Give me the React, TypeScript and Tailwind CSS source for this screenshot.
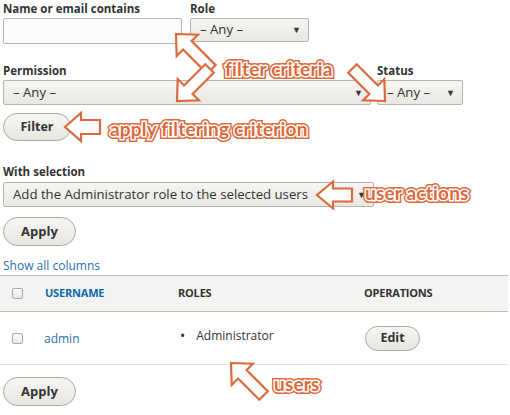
import React from "react";

const OR = "#dc6a3c";

function Arrow({ x, y, rot, H, W, w, L }: { x: number; y: number; rot: number; H: number; W: number; w: number; L: number }) {
  const pts = [
    [0, 0],
    [H, -W],
    [H, -w],
    [H + L, -w],
    [H + L, w],
    [H, w],
    [H, W],
  ]
    .map((p) => p.join(","))
    .join(" ");
  return (
    <polygon
      points={pts}
      transform={`translate(${x} ${y}) rotate(${rot})`}
      fill="white"
      stroke={OR}
      strokeWidth={2.2}
      strokeLinejoin="miter"
    />
  );
}

function Note({ children, className }: { children: React.ReactNode; className: string }) {
  const base =
    "absolute left-0 top-0 whitespace-nowrap font-bold text-[19px] leading-none tracking-[0.2px] text-[#dc6a3c] [font-family:Lato,'Open_Sans',sans-serif] [paint-order:stroke_fill]";
  return (
    <span className={`absolute ${className}`}>
      <span className="invisible whitespace-nowrap font-bold text-[19px] leading-none tracking-[0.2px] [font-family:Lato,'Open_Sans',sans-serif]">
        {children}
      </span>
      <span className={`${base} [-webkit-text-stroke:6px_#dc6a3c]`}>{children}</span>
      <span className={`${base} [-webkit-text-stroke:3px_#ffffff]`}>{children}</span>
    </span>
  );
}

function Select({ text, className }: { text: string; className: string }) {
  return (
    <div
      className={`flex items-center justify-between border border-[#b4b4b0] rounded-[2px] bg-gradient-to-b from-[#f6f5f2] to-[#e9e8e3] text-[#333] text-[13.2px] ${className}`}
    >
      <span className="pl-[9px] whitespace-nowrap">{text}</span>
      <span className="pr-[7px] text-[9px] text-[#333]">▼</span>
    </div>
  );
}

function Button({ label, className }: { label: string; className: string }) {
  return (
    <div
      className={`flex items-center justify-center rounded-full border border-[#a8a8a4] bg-gradient-to-b from-[#f7f6f3] to-[#e7e6e1] font-bold text-[#333] text-[12.5px] ${className}`}
    >
      {label}
    </div>
  );
}

function Label({ children, className = "" }: { children: React.ReactNode; className?: string }) {
  return <div className={`font-bold text-[11.5px] leading-[14px] text-[#333] ${className}`}>{children}</div>;
}

function Checkbox() {
  return <div className="w-[11px] h-[11px] rounded-[2px] border border-[#a9a9a9] bg-gradient-to-b from-[#fdfdfd] to-[#e8e8e8]" />;
}

export default function App() {
  return (
    <div className="relative w-[510px] h-[415px] bg-white overflow-hidden [font-family:'Open_Sans',sans-serif] text-[#333]">
      <div className="pl-[3px] pt-[2px]">
        <div className="flex gap-[8px]">
          <div>
            <Label className="mb-[2px]">Name or email contains</Label>
            <div className="w-[179px] h-[26px] border border-[#b4b4b0] rounded-[2px] bg-[#fcfcfa]" />
          </div>
          <div>
            <Label className="mb-[2px]">Role</Label>
            <Select text="– Any –" className="w-[119px] h-[24px]" />
          </div>
        </div>

        <div className="flex gap-[6px] mt-[20px]">
          <div>
            <Label className="mb-[2px]">Permission</Label>
            <Select text="– Any –" className="w-[368px] h-[25px]" />
          </div>
          <div>
            <Label className="mb-[2px]">Status</Label>
            <Select text="– Any –" className="w-[86px] h-[25px]" />
          </div>
        </div>

        <Button label="Filter" className="mt-[8px] w-[68px] h-[28px]" />

        <Label className="mt-[24px] mb-[3px]">With selection</Label>
        <Select text="Add the Administrator role to the selected users" className="w-[371px] h-[25px]" />

        <Button label="Apply" className="mt-[10px] w-[73px] h-[29px] text-[13px]" />

        <div className="mt-[13px] text-[12px] leading-[14px] text-[#2a6fae]">Show all columns</div>
      </div>

      <div className="mt-[2px] w-[508px]">
        <div className="grid grid-cols-[45px_133px_186px_1fr] items-center h-[37px] bg-[#f3f3f1] border-t border-[#bdbdb9] border-b border-b-[#bdbdb9] text-[11px] font-bold tracking-[-0.2px]">
          <div className="pl-[12px]">
            <Checkbox />
          </div>
          <div className="text-[#0a6aad]">USERNAME</div>
          <div className="text-[#333]">ROLES</div>
          <div className="text-[#333]">OPERATIONS</div>
        </div>
        <div className="grid grid-cols-[45px_133px_186px_1fr] items-center h-[53px] border-b border-[#e2e1dc] text-[12px]">
          <div className="pl-[12px]">
            <Checkbox />
          </div>
          <div className="text-[#2a6fae] -ml-[1px] pt-[2px]">admin</div>
          <div className="flex items-center gap-[11px] pl-[2px] -mt-[4px]">
            <span className="text-[14px] leading-none">•</span>
            <span>Administrator</span>
          </div>
          <div className="pl-[1px]">
            <Button label="Edit" className="w-[55px] h-[25px] text-[12.5px]" />
          </div>
        </div>
      </div>

      <div className="pl-[3px] pt-[12px]">
        <Button label="Apply" className="w-[73px] h-[29px] text-[13px]" />
      </div>

      {/* annotations overlay */}
      <svg className="absolute left-0 top-0 pointer-events-none" width="510" height="415">
        <Arrow x={176} y={34} rot={45} H={16} W={15} w={6} L={34} />
        <Arrow x={177} y={101} rot={-45} H={16} W={15} w={6} L={30} />
        <Arrow x={385} y={101} rot={225} H={16} W={15} w={6} L={30} />
        <Arrow x={65} y={127} rot={0} H={16} W={14} w={7} L={19} />
        <Arrow x={317} y={195} rot={0} H={16} W={13.5} w={6.5} L={19} />
        <Arrow x={231} y={363} rot={45} H={16} W={15} w={6} L={30} />
      </svg>
      <Note className="left-[225px] top-[59px]">filter criteria</Note>
      <Note className="left-[110px] top-[119px]">apply filtering criterion</Note>
      <Note className="left-[365px] top-[183px]">user actions</Note>
      <Note className="left-[274px] top-[374px]">users</Note>
    </div>
  );
}
